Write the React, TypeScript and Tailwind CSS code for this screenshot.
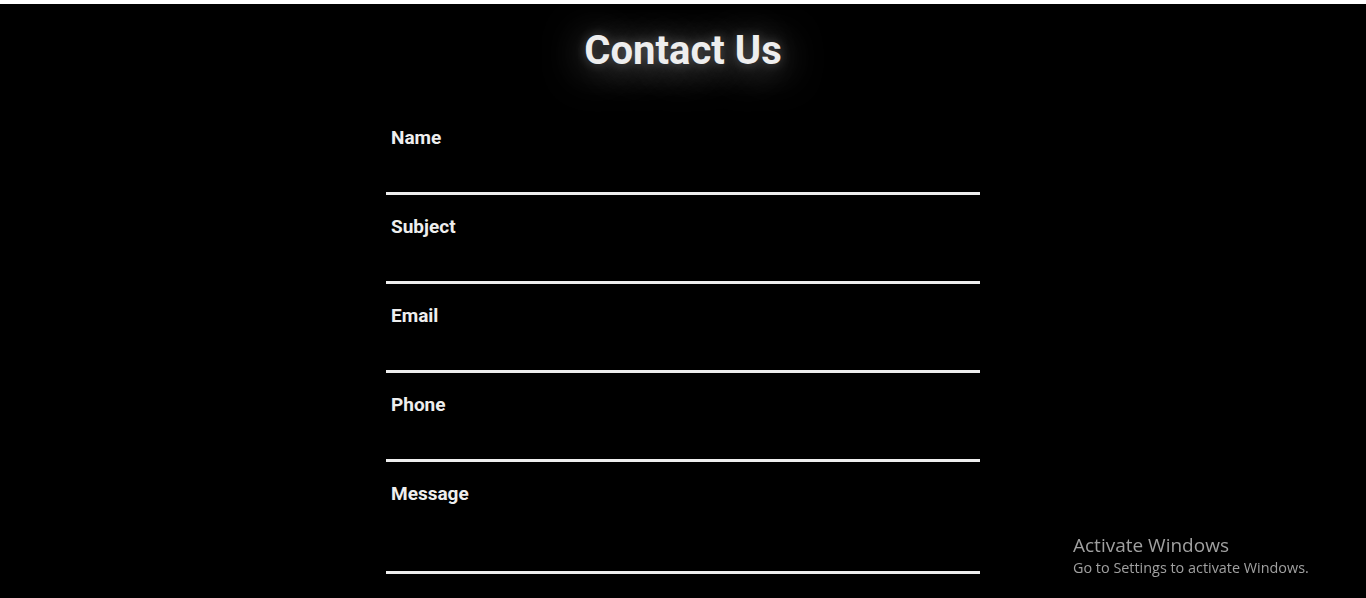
import React from 'react';

const fields = [
  { label: 'Name', tall: false },
  { label: 'Subject', tall: false },
  { label: 'Email', tall: false },
  { label: 'Phone', tall: false },
  { label: 'Message', tall: true },
];

export default function App() {
  return (
    <div className="min-h-screen bg-white pt-[4px] font-['Roboto',sans-serif]">
      <div className="relative min-h-[594px] bg-black pb-10">
        <h1 className="pt-[23px] text-center text-[40px] font-bold leading-[48px] text-[#eeeeee] [text-shadow:0_4px_40px_rgba(255,255,255,0.6),0_0_12px_rgba(255,255,255,0.25)]">
          Contact Us
        </h1>

        <form className="mx-auto mt-[31px] flex w-[594px] flex-col">
          {fields.map((f) => (
            <div key={f.label} className="mt-[18px] flex flex-col">
              <label className="pl-[5px] text-[19px] font-bold leading-[27px] text-[#eeeeee]">
                {f.label}
              </label>
              {f.tall ? (
                <textarea className="h-[67px] resize-none border-b-[3px] border-[#eeeeee] bg-transparent outline-none" />
              ) : (
                <input className="h-[44px] border-b-[3px] border-[#eeeeee] bg-transparent outline-none" />
              )}
            </div>
          ))}
        </form>

        <div className="fixed left-[1073px] top-[532px] font-['Open_Sans',sans-serif] text-[#a0a0a0]">
          <div className="text-[19px] leading-[26px]">Activate Windows</div>
          <div className="text-[14.4px] leading-[19px]">Go to Settings to activate Windows.</div>
        </div>
      </div>
    </div>
  );
}
